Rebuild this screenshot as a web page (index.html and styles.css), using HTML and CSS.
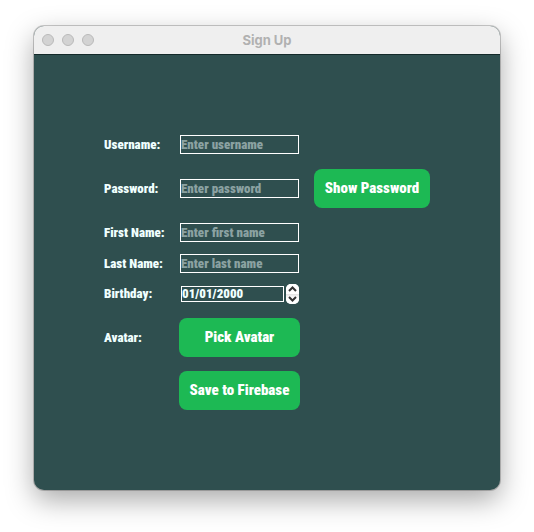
FILE: index.html
```html
<!DOCTYPE html>
<html lang="en">
<head>
<meta charset="utf-8">
<title>Sign Up</title>
<link rel="stylesheet" href="styles.css">
</head>
<body>
<main class="window">
  <header class="titlebar">
    <div class="lights"><i class="light"></i><i class="light"></i><i class="light"></i></div>
    <h1 class="title">Sign Up</h1>
  </header>
  <form class="form">
    <label for="username">Username:</label>
    <input class="field" id="username" type="text" placeholder="Enter username">

    <label for="password">Password:</label>
    <input class="field" id="password" type="password" placeholder="Enter password">
    <button class="button spaced" type="button">Show Password</button>

    <label for="first">First Name:</label>
    <input class="field" id="first" type="text" placeholder="Enter first name">

    <label for="last">Last Name:</label>
    <input class="field" id="last" type="text" placeholder="Enter last name">

    <label for="birthday">Birthday:</label>
    <div class="date">
      <input class="field date-field" id="birthday" type="text" value="01/01/2000">
      <div class="stepper">
        <button class="step" type="button" aria-label="Later"><svg width="9" height="6" viewBox="0 0 9 6"><path d="M1 5 4.5 1.5 8 5"/></svg></button>
        <button class="step" type="button" aria-label="Earlier"><svg width="9" height="6" viewBox="0 0 9 6"><path d="M1 1 4.5 4.5 8 1"/></svg></button>
      </div>
    </div>

    <label for="avatar">Avatar:</label>
    <button class="button spaced" id="avatar" type="button">Pick Avatar</button>

    <button class="button save" type="submit">Save to Firebase</button>
  </form>
</main>
</body>
</html>
```
FILE: styles.css
```css
* {
  box-sizing: border-box;
}

body {
  display: flex;
  min-height: 100vh;
  margin: 0;
  padding: 26px 34px 42px;
  background: #fff;
}

.window {
  display: flex;
  flex: 1;
  flex-direction: column;
  overflow: hidden;
  border-radius: 10px;
  background: #2f4f4f;
  box-shadow: 0 0 0 1px rgba(0, 0, 0, 0.2), 0 10px 28px rgba(0, 0, 0, 0.34);
}

.titlebar {
  display: grid;
  grid-template-columns: 1fr auto 1fr;
  align-items: center;
  height: 29px;
  padding: 0 8px;
  border-bottom: 1px solid #142a2a;
  background: #efefef;
}

.lights {
  display: flex;
  gap: 8px;
}

.light {
  width: 12px;
  height: 12px;
  border: 1px solid #b9b9b9;
  border-radius: 50%;
  background: #d3d3d3;
}

.title {
  margin: 0;
  color: #b1b1b1;
  font: bold 13px/16px Inter, "Liberation Sans", sans-serif;
}

.form {
  display: grid;
  flex: 1;
  grid-template-columns: 61px 121px 116px;
  gap: 10px 14px;
  place-content: center;
  align-items: center;
  padding-bottom: 2px;
  color: azure;
  font: 900 13px/17px Impact, "Roboto Condensed", "Liberation Sans Narrow", "Liberation Sans", sans-serif;
}

label {
  grid-column: 1;
  white-space: nowrap;
}

.field {
  min-width: 0;
  height: 19px;
  margin: 1px;
  padding: 0;
  border: 1px solid #fff;
  border-radius: 0;
  background: transparent;
  color: azure;
  font: inherit;
}

.field::placeholder {
  color: #8ba2a2;
  opacity: 1;
}

.date {
  display: flex;
  align-items: center;
  height: 20px;
  padding: 0 1px;
}

.date-field {
  flex: 1;
  height: 16px;
  margin: 0 2px 0 1px;
}

.stepper {
  display: flex;
  flex-direction: column;
  width: 13px;
  height: 20px;
  overflow: hidden;
  border-radius: 5px;
  background: #fff;
}

.step {
  display: flex;
  flex: 1;
  align-items: center;
  justify-content: center;
  padding: 0;
  border: 0;
  background: #fff;
}

.step + .step {
  background: linear-gradient(#e2e2e2, #fff 4px);
}

.step path {
  fill: none;
  stroke: #333;
  stroke-width: 2;
}

.button {
  height: 39px;
  padding: 0;
  border: 0;
  border-radius: 8px;
  background: #1db954;
  color: #fff;
  font: inherit;
  font-size: 15px;
  white-space: nowrap;
}

.spaced {
  margin: 4px 0;
}

.save {
  grid-column: 2;
}
```
